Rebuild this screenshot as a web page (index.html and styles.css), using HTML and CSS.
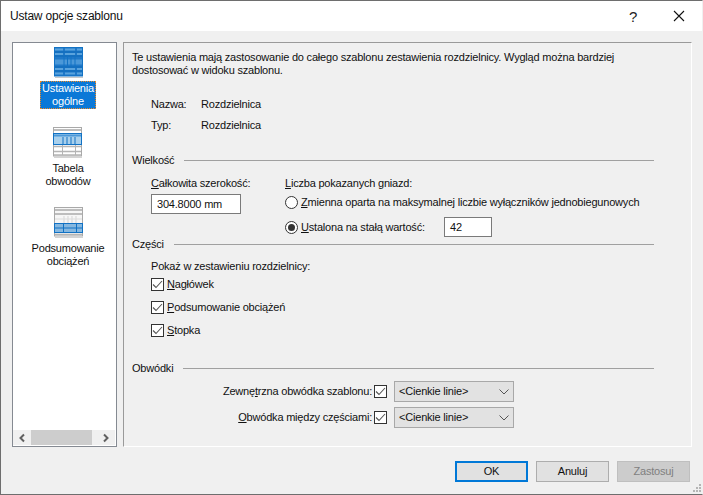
FILE: index.html
```html
<!DOCTYPE html>
<html lang="pl">
<head>
<meta charset="utf-8">
<title>Ustaw opcje szablonu</title>
<link rel="stylesheet" href="styles.css">
</head>
<body>
<div class="window">
  <header class="titlebar">
    <span class="title">Ustaw opcje szablonu</span>
    <span class="help">?</span>
    <svg class="close" width="12" height="12" viewBox="0 0 12 12"><path d="M1 1 11 11M11 1 1 11" stroke="#111" fill="none" stroke-width="1.100"/></svg>
  </header>
  <div class="content">
    <nav class="sidebar">
      <div class="nav-items">
        <div class="nav-item">
          <svg class="nav-icon" width="30" height="31" viewBox="0 0 30 31">
            <rect x="0.5" y="0.5" width="28" height="28.5" fill="#1f78c8" stroke="#1272c4"/>
            <rect x="1" y="30" width="28" height="1" fill="#c9c9c9"/>
            <path d="M1 5h27M1 9h27M1 20h27M1 24h27" stroke="#0d68b8"/>
            <path d="M1 12.500h27v5H1z" fill="#4b98d8"/>
            <path d="M1 2.500h8M11 2.500h10M23 2.500h5M1 7h8M11 7h10M23 7h5M1 22h8M11 22h10M23 22h5M1 26.500h8M11 26.500h10M23 26.500h5" stroke="#5aa3dd" stroke-width="2"/>
            <path d="M10 9v11M13.500 9v11M17 9v11M21 9v11" stroke="#1272c4"/>
          </svg>
          <span class="nav-label selected">Ustawienia<br>ogólne</span>
        </div>
        <div class="nav-item">
          <svg class="nav-icon" width="30" height="31" viewBox="0 0 30 31">
            <rect x="0.5" y="0.5" width="28" height="28.5" fill="#fff" stroke="#a9a9a9"/>
            <rect x="1" y="30" width="28" height="1" fill="#d4d4d4"/>
            <path d="M1 3h27M1 7h27" stroke="#bdbdbd" stroke-width="2"/>
            <rect x="0.500" y="6.500" width="28" height="11" fill="#a9d0ec" stroke="#1272c4"/>
            <path d="M1 8.500h27" stroke="#4b98d8" stroke-width="2"/>
            <path d="M10 10v7M14 10v7M18 10v7M22 10v7" stroke="#1272c4"/>
            <path d="M1 19.500h27M1 24.500h27M1 28h27" stroke="#b5b5b5" stroke-width="1.500"/>
            <path d="M9.500 18v10M22.500 18v10" stroke="#b5b5b5"/>
          </svg>
          <span class="nav-label">Tabela<br>obwodów</span>
        </div>
        <div class="nav-item">
          <svg class="nav-icon" width="30" height="31" viewBox="0 0 30 31">
            <rect x="0.5" y="0.5" width="28" height="28.5" fill="#f6f6f6" stroke="#a9a9a9"/>
            <rect x="1" y="30" width="28" height="1" fill="#d4d4d4"/>
            <path d="M1 3h27M1 7h27" stroke="#bdbdbd" stroke-width="2"/>
            <path d="M10 9v7M14 9v7M18 9v7M22 9v7" stroke="#d5d5d5"/>
            <path d="M1 12h27" stroke="#dcdcdc"/>
            <rect x="0.500" y="16.500" width="28" height="9" fill="#86b8e0" stroke="#1272c4"/>
            <path d="M1 21h27" stroke="#1272c4"/>
            <path d="M9.500 17v8M22.500 17v8" stroke="#1272c4"/>
            <path d="M1 27.500h27" stroke="#b5b5b5" stroke-width="1.500"/>
          </svg>
          <span class="nav-label">Podsumowanie<br>obciążeń</span>
        </div>
      </div>
      <div class="scrollbar">
        <svg width="8" height="10" viewBox="0 0 8 10"><path d="M6 1.500 2.500 5 6 8.500" fill="none" stroke="#606060" stroke-width="2"/></svg>
        <div class="thumb"></div>
        <svg width="8" height="10" viewBox="0 0 8 10"><path d="M2 1.500 5.500 5 2 8.500" fill="none" stroke="#606060" stroke-width="2"/></svg>
      </div>
    </nav>
    <main class="panel">
      <p class="intro">Te ustawienia mają zastosowanie do całego szablonu zestawienia rozdzielnicy. Wygląd można bardziej<br>dostosować w widoku szablonu.</p>
      <dl class="info">
        <dt>Nazwa:</dt><dd>Rozdzielnica</dd>
        <dt>Typ:</dt><dd>Rozdzielnica</dd>
      </dl>

      <div class="group-head size-head"><span>Wielkość</span><i></i></div>
      <div class="size-row">
        <div class="width-col">
          <label class="line"><u>C</u>ałkowita szerokość:</label>
          <div class="input width-input">304.8000 mm</div>
        </div>
        <div class="count-col">
          <label class="line"><u>L</u>iczba pokazanych gniazd:</label>
          <div class="radio-row first-radio"><span class="radio"></span><span><u>Z</u>mienna oparta na maksymalnej liczbie wyłączników jednobiegunowych</span></div>
          <div class="radio-row second-radio"><span class="radio on"></span><span class="fixed-label"><u>U</u>stalona na stałą wartość:</span><div class="input count-input">42</div></div>
        </div>
      </div>

      <div class="group-head parts-head"><span>Części</span><i></i></div>
      <div class="parts">
        <div class="line">Pokaż w zestawieniu rozdzielnicy:</div>
        <div class="check-row"><svg class="check" width="13" height="13" viewBox="0 0 13 13"><rect x=".5" y=".5" width="12" height="12" fill="#fff" stroke="#333"/><path d="M2 6.500 5 9.500 11 3" fill="none" stroke="#555" stroke-width="1.100"/></svg><span><u>N</u>agłówek</span></div>
        <div class="check-row"><svg class="check" width="13" height="13" viewBox="0 0 13 13"><rect x=".5" y=".5" width="12" height="12" fill="#fff" stroke="#333"/><path d="M2 6.500 5 9.500 11 3" fill="none" stroke="#555" stroke-width="1.100"/></svg><span><u>P</u>odsumowanie obciążeń</span></div>
        <div class="check-row"><svg class="check" width="13" height="13" viewBox="0 0 13 13"><rect x=".5" y=".5" width="12" height="12" fill="#fff" stroke="#333"/><path d="M2 6.500 5 9.500 11 3" fill="none" stroke="#555" stroke-width="1.100"/></svg><span><u>S</u>topka</span></div>
      </div>

      <div class="group-head border-head"><span>Obwódki</span><i></i></div>
      <div class="borders">
        <div class="border-row">
          <span class="border-label">Zewnę<u>t</u>rzna obwódka szablonu:</span>
          <svg class="check" width="13" height="13" viewBox="0 0 13 13"><rect x=".5" y=".5" width="12" height="12" fill="#fff" stroke="#333"/><path d="M2 6.500 5 9.500 11 3" fill="none" stroke="#555" stroke-width="1.100"/></svg>
          <div class="select"><span>&lt;Cienkie linie&gt;</span><svg width="10" height="6" viewBox="0 0 10 6"><path d="M.5 .5 5 5 9.500 .5" fill="none" stroke="#555"/></svg></div>
        </div>
        <div class="border-row">
          <span class="border-label"><u>O</u>bwódka między częściami:</span>
          <svg class="check" width="13" height="13" viewBox="0 0 13 13"><rect x=".5" y=".5" width="12" height="12" fill="#fff" stroke="#333"/><path d="M2 6.500 5 9.500 11 3" fill="none" stroke="#555" stroke-width="1.100"/></svg>
          <div class="select"><span>&lt;Cienkie linie&gt;</span><svg width="10" height="6" viewBox="0 0 10 6"><path d="M.5 .5 5 5 9.500 .5" fill="none" stroke="#555"/></svg></div>
        </div>
      </div>
    </main>
  </div>
  <footer class="buttons">
    <div class="btn default">OK</div>
    <div class="btn">Anuluj</div>
    <div class="btn disabled">Zastosuj</div>
    <svg class="grip" width="8" height="8" viewBox="0 0 8 8"><path d="M6 0h2v2H6zM3 3h2v2H3zM6 3h2v2H6zM0 6h2v2H0zM3 6h2v2H3zM6 6h2v2H6z" fill="#b5b5b5"/></svg>
  </footer>
</div>
</body>
</html>
```
FILE: styles.css
```css
* { box-sizing: border-box; }
html, body { margin: 0; padding: 0; }
body {
  width: 703px;
  height: 495px;
  overflow: hidden;
  font-family: "Liberation Sans", Roboto, sans-serif;
  font-size: 11px;
  line-height: 13px;
  letter-spacing: -0.2px;
  color: #111;
}
u { text-underline-offset: 1px; }
.window {
  width: 703px;
  height: 495px;
  background: #f0f0f0;
  border: 1px solid #6e6e6e;
  border-right-color: #f0f0f0;
  display: flex;
  flex-direction: column;
}
.titlebar {
  height: 30px;
  flex: none;
  background: #fff;
  display: flex;
  align-items: center;
  padding-left: 9px;
}
.title { flex: 1; font-size: 12px; }
.help { width: 14px; font-size: 15px; color: #222; margin-right: 33px; text-align: center; }
.close { margin-right: 17px; }
.content {
  height: 405px;
  flex: none;
  margin-top: 11px;
  display: flex;
  gap: 6px;
  padding-left: 11px;
}
.sidebar {
  width: 105px;
  background: #fff;
  border: 1px solid #858a92;
  display: flex;
  flex-direction: column;
  padding: 0 1px 1px 0;
}
.nav-items { flex: 1; display: flex; flex-direction: column; align-items: center; gap: 18px; padding: 4px 0 0 8px; }
.nav-item { display: flex; flex-direction: column; align-items: center; text-align: center; }
.nav-label { margin-top: 3px; padding: 1px; display: block; }
.nav-icon { display: block; margin-left: 1px; }
.nav-label.selected {
  width: 56px;
  background: #0a78d7;
  color: #fff;
  outline: 1px dotted #f08a24;
  outline-offset: -1px;
}
.scrollbar {
  height: 15px;
  background: #f0f0f0;
  display: flex;
  align-items: center;
}
.scrollbar svg { flex: none; margin: 0 5px; }
.scrollbar svg:last-child { margin-left: 10px; }
.thumb { width: 62px; height: 15px; background: #cdcdcd; }
.panel {
  width: 569px;
  border: 1px solid #9a9a9a;
  border-color: #9a9a9a #fff #fff #9a9a9a;
  padding: 8px 0 0 8px;
}
.intro { margin: 0; height: 26px; }
.info {
  margin: 21px 0 0 19px;
  display: grid;
  grid-template-columns: 50px 1fr;
  grid-auto-rows: 21px;
  align-items: start;
}
.info dt, .info dd { margin: 0; }
.group-head { display: flex; align-items: center; gap: 10px; width: 522px; height: 14px; }
.group-head i { flex: 1; height: 1px; background: #a0a0a0; }
.size-head { margin-top: 13px; }
.size-row { display: flex; margin: 10px 0 0 19px; }
.width-col { width: 134px; }
.line { display: block; height: 13px; }
.input {
  background: #fff;
  border: 1px solid #7a7a7a;
  display: flex;
  align-items: center;
  padding-left: 5px;
}
.width-input { width: 90px; height: 20px; margin-top: 4px; }
.count-col { flex: 1; }
.radio-row { display: flex; align-items: center; gap: 3px; }
.first-radio { margin-top: 5px; height: 14px; }
.second-radio { margin-top: 8px; height: 20px; }
.radio {
  width: 13px;
  height: 13px;
  border-radius: 50%;
  border: 1px solid #333;
  background: #fff;
  flex: none;
  display: flex;
  align-items: center;
  justify-content: center;
}
.radio.on::after { content: ""; width: 7px; height: 7px; border-radius: 50%; background: #333; }
.fixed-label { width: 140px; flex: none; }
.count-input { width: 48px; height: 20px; }
.parts { margin: 9px 0 0 19px; }
.check { flex: none; display: block; }
.check-row { display: flex; align-items: center; gap: 3px; height: 23px; }
.border-head { margin-top: 19px; }
.borders { margin-top: 6px; display: flex; flex-direction: column; gap: 5px; }
.border-row { display: flex; align-items: center; height: 21px; }
.border-label { width: 240px; flex: none; text-align: right; margin-right: 2px; }
.select {
  width: 120px;
  height: 21px;
  margin-left: 7px;
  background: #e2e2e2;
  border: 1px solid #a8a8a8;
  display: flex;
  align-items: center;
  justify-content: space-between;
  padding: 0 4px;
}
.buttons {
  flex: 1;
  display: flex;
  justify-content: flex-end;
  gap: 8px;
  padding: 14px 12px 0 0;
  position: relative;
}
.btn {
  width: 73px;
  height: 21px;
  background: #e1e1e1;
  border: 1px solid #adadad;
  display: flex;
  align-items: center;
  justify-content: center;
}
.btn.default { border: 2px solid #0078d7; }
.btn.disabled { background: #cccccc; border-color: #bfbfbf; color: #7f7f7f; }
.grip { position: absolute; right: 1px; bottom: 2px; }
```
